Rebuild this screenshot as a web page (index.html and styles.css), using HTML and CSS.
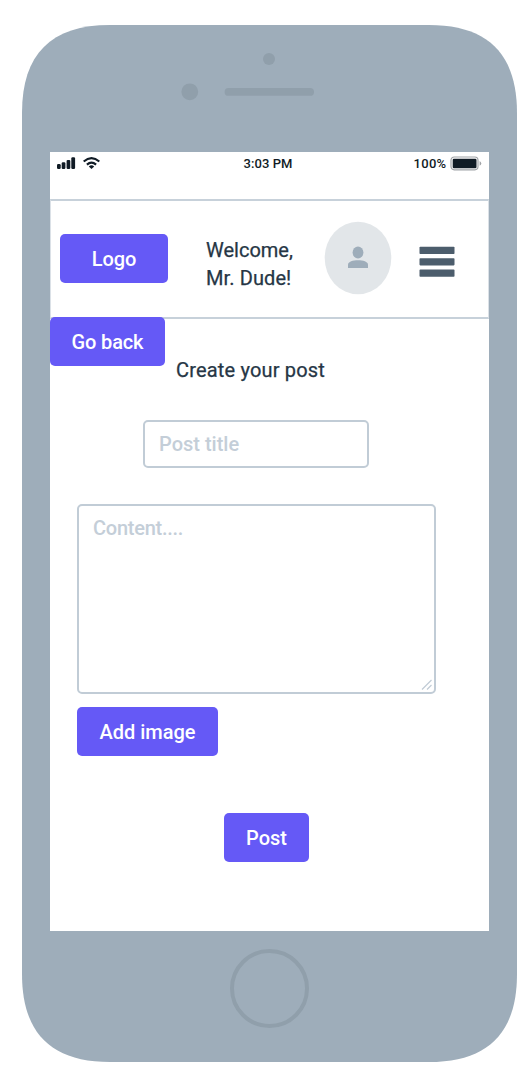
FILE: index.html
```html
<!DOCTYPE html>
<html lang="en">
<head>
<meta charset="utf-8">
<title>Create your post</title>
<link rel="stylesheet" href="styles.css">
</head>
<body>
<div class="phone">
  <svg class="phone-body" viewBox="0 0 495 1037" preserveAspectRatio="none" aria-hidden="true">
    <path fill="#9eadba" d="M0 88C0 29 29 0 88 0H407C466 0 495 29 495 88V949C495 1008 466 1037 407 1037H88C29 1037 0 1008 0 949Z"/>
  </svg>
  <div class="phone-top">
    <svg width="126" height="46" viewBox="0 0 126 46" fill="#909fab" aria-hidden="true">
      <circle cx="88" cy="7" r="6"/><circle cx="8.8" cy="39.8" r="8.4"/><rect x="43.6" y="36" width="89.4" height="7.8" rx="3.9"/>
    </svg>
  </div>
  <main class="screen">
    <div class="status">
      <div class="signal">
        <svg width="46" height="16" viewBox="0 0 46 16" fill="#101b25" aria-hidden="true">
          <rect x="0" y="8" width="3.7" height="5" rx="1.2"/><rect x="4.7" y="6.3" width="3.7" height="6.7" rx="1.2"/><rect x="9.6" y="3.9" width="3.7" height="9.1" rx="1.2"/><rect x="14.3" y="1.2" width="3.8" height="11.8" rx="1.2"/>
          <path d="M26.7 5.5Q34.5-1.3 42.3 5.5M29.9 8.6Q34.5 4.5 39.1 8.6" fill="none" stroke="#101b25" stroke-width="2.1"/>
          <path d="M31.8 10.4Q34.5 8.3 37.2 10.4L34.5 13.1Z"/>
        </svg>
      </div>
      <span class="time">3:03 PM</span>
      <div class="battery">
        <span class="percent">100%</span>
        <svg width="32" height="15" viewBox="0 0 32 15" aria-hidden="true">
          <rect x="1" y="1" width="27" height="12.8" rx="3.2" fill="none" stroke="#a0a3a7" stroke-width="1.2"/>
          <rect x="2.7" y="2.7" width="23.8" height="9.5" rx="1.2" fill="#101b25"/>
          <path d="M29.6 5.1Q33 7.4 29.6 9.7Z" fill="#a0a3a7"/>
        </svg>
      </div>
    </div>
    <header class="header">
      <button class="btn logo">Logo</button>
      <p class="welcome"><span class="line w1">Welcome,</span><span class="line w2">Mr. Dude!</span></p>
      <svg class="avatar" width="68" height="74" viewBox="0 0 68 74" aria-hidden="true">
        <ellipse cx="34" cy="37" rx="33.3" ry="36.3" fill="#e2e6e9"/>
        <ellipse cx="34" cy="31.5" rx="5.4" ry="6" fill="#9eadba"/>
        <path fill="#9eadba" d="M24 47V43.5C24 37.7 44 37.7 44 43.5V47Z"/>
      </svg>
      <svg class="menu" width="36" height="32" viewBox="0 0 36 32" fill="#4c5d6c" aria-hidden="true">
        <rect x=".5" y=".8" width="35" height="7.2" rx=".8"/><rect x=".5" y="12.2" width="35" height="7.2" rx=".8"/><rect x=".5" y="23.6" width="35" height="7.2" rx=".8"/>
      </svg>
    </header>
    <button class="btn back">Go back</button>
    <h1 class="title">Create your post</h1>
    <input class="field post-title" type="text" placeholder="Post title" aria-label="Post title">
    <div class="content-box">
      <textarea class="field content" placeholder="Content...." aria-label="Content"></textarea>
      <svg class="grip" width="12" height="12" viewBox="0 0 12 12" fill="none" stroke="#c1ccd6" stroke-width="1.2" aria-hidden="true"><path d="M1 10.5L10.5 1M6 10.5L10.5 6"/></svg>
    </div>
    <button class="btn add">Add image</button>
    <button class="btn post">Post</button>
  </main>
  <div class="home"></div>
</div>
</body>
</html>
```
FILE: styles.css
```css
* { box-sizing: border-box; }
body { margin: 0; background: #fff; font-family: Roboto, "Liberation Sans", sans-serif; color: #263645; }
.phone { position: relative; width: 495px; height: 1037px; margin: 25px 0 0 22px; padding: 27px 28px 0; display: flex; flex-direction: column; align-items: center; }
.phone-body { position: absolute; inset: 0; width: 100%; height: 100%; z-index: -1; }
.phone-top { width: 439px; height: 99.5px; padding-left: 131px; }
.phone-top svg { display: block; overflow: visible; }
.screen { width: 439px; height: 779.5px; background: #fff; display: flex; flex-direction: column; align-items: flex-start; }
.status { width: 100%; height: 47px; padding: 4px 7.5px 0 6.5px; display: grid; grid-template-columns: 1fr auto 1fr; align-items: start; font-size: 13px; line-height: 16px; font-weight: 500; color: #101b25; }
.status svg { display: block; }
.time { letter-spacing: .1px; margin-right: 2px; }
.battery { display: flex; justify-content: flex-end; gap: 3px; }
.percent { letter-spacing: .3px; }
.header { width: 100%; height: 120px; border: 2px solid #c7d1da; border-left: 1px solid #dbe1e7; border-right: 1px solid #dbe1e7; display: flex; align-items: flex-start; padding: 0 8px 0 9px; flex: none; }
.btn { display: block; height: 49px; border: 0; border-radius: 5px; padding: 2px 0 0; background: #6559f6; color: #fff; font: 500 20px/47px Roboto, "Liberation Sans", sans-serif; text-align: center; flex: none; }
.logo { width: 108px; margin: 33px 0 0; letter-spacing: -.1px; }
.welcome { margin: 35px 0 0 38px; width: 88px; font-size: 20px; line-height: 28px; white-space: nowrap; flex: none; }
.line { display: block; }
.w2 { letter-spacing: .1px; }
.avatar { margin: 20px 0 0 30px; flex: none; }
.menu { margin: 45px 0 0 27px; flex: none; }
.back { width: 115px; margin-top: -2px; letter-spacing: -.15px; }
.title { margin: -9.5px 0 0 126px; font-size: 20px; line-height: 28px; font-weight: 400; letter-spacing: .18px; white-space: nowrap; }
.line, .title { font-weight: 400; -webkit-text-stroke: .25px; }
.field { display: block; border: 2px solid #c1ccd6; border-radius: 5px; background: #fff; padding: 0 14px; font: 500 20px/28px Roboto, "Liberation Sans", sans-serif; resize: none; outline: 0; }
.field::placeholder { color: #c4ced8; opacity: 1; }
.post-title { width: 226px; height: 48px; margin: 36px 0 0 93px; }
.content-box { position: relative; margin: 36px 0 0 27px; }
.content { width: 359px; height: 190px; padding-top: 8px; letter-spacing: -.25px; }
.grip { position: absolute; right: 3px; bottom: 3px; }
.add { width: 141px; margin: 13px 0 0 27px; }
.post { width: 85px; margin: 57px 0 0 174px; }
.home { width: 79px; height: 79px; margin-top: 18px; border: 4.5px solid #909fab; border-radius: 50%; }
```
